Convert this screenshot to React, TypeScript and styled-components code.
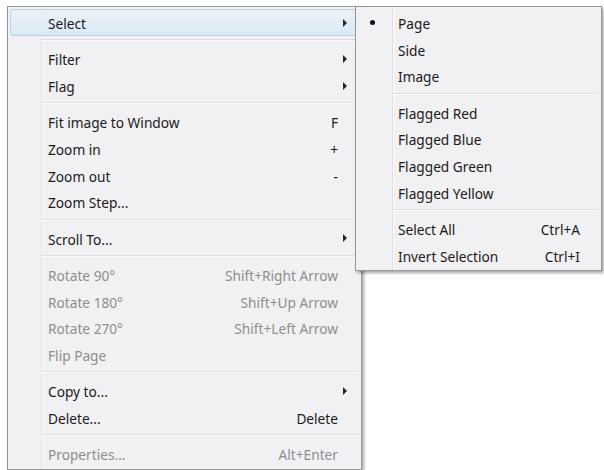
import React from "react";
import styled, { createGlobalStyle } from "styled-components";

const GlobalStyle = createGlobalStyle`
  html, body { margin: 0; padding: 0; background: #ffffff; }
  body { font-family: "Noto Sans", "Open Sans", sans-serif; }
`;

const Stage = styled.div`
  display: flex;
  align-items: flex-start;
  padding: 6px 0 0 7px;
  width: 604px;
  height: 470px;
  box-sizing: border-box;
  overflow: hidden;
`;

const Menu = styled.div<{ $width: number; $gutter: number; $overlap?: boolean }>`
  position: relative;
  width: ${(p) => p.$width}px;
  box-sizing: border-box;
  flex: none;
  border: 1px solid #979797;
  padding: 2px;
  background-color: #f1f0f2;
  background-image: linear-gradient(
    to right,
    transparent ${(p) => p.$gutter}px,
    #e0dfe2 ${(p) => p.$gutter}px,
    #e0dfe2 ${(p) => p.$gutter + 1}px,
    #fbfbfc ${(p) => p.$gutter + 1}px,
    #fbfbfc ${(p) => p.$gutter + 2}px,
    transparent ${(p) => p.$gutter + 2}px
  );
  box-shadow: 2px 2px 3px rgba(0, 0, 0, 0.35);
  margin-left: ${(p) => (p.$overlap ? -7 : 0)}px;
  z-index: ${(p) => (p.$overlap ? 2 : 1)};
  font-size: 13.7px;
  color: #1b1b1b;
`;

const Item = styled.div<{ $disabled?: boolean; $active?: boolean }>`
  display: flex;
  align-items: center;
  height: 26.7px;
  box-sizing: border-box;
  color: ${(p) => (p.$disabled ? "#8f8f8f" : "#1b1b1b")};
  border: 1px solid ${(p) => (p.$active ? "#b5d3e7" : "transparent")};
  border-radius: 3px;
  background: ${(p) =>
    p.$active ? "linear-gradient(to bottom, #eaf3fa, #d9e9f4)" : "transparent"};
  white-space: nowrap;
`;

const Lead = styled.span<{ $width: number }>`
  width: ${(p) => p.$width - 1}px;
  flex: none;
  display: flex;
  align-items: center;
`;

const Bullet = styled.span`
  margin-left: 11px;
  width: 5px;
  height: 5px;
  border-radius: 50%;
  background: #111;
`;

const Label = styled.span`
  flex: 1;
  line-height: 1;
  padding-top: 3px;
`;

const Shortcut = styled.span`
  line-height: 1;
  padding-top: 3px;
`;

const Trail = styled.span<{ $width: number }>`
  width: ${(p) => p.$width - 1}px;
  flex: none;
  display: flex;
  align-items: center;
`;

const Arrow = styled.span`
  margin-left: 5px;
  margin-top: 1px;
  width: 0;
  height: 0;
  border-left: 4px solid #262626;
  border-top: 4px solid transparent;
  border-bottom: 4px solid transparent;
`;

const Separator = styled.div<{ $indent: number }>`
  height: 9.6px;
  display: flex;
  align-items: center;
  padding-left: ${(p) => p.$indent}px;
  &::after {
    content: "";
    flex: 1;
    border-top: 1px solid #dedde0;
    border-bottom: 1px solid #fbfbfc;
    box-sizing: border-box;
    height: 2px;
  }
`;

type Entry =
  | { sep: true }
  | {
      sep?: false;
      label: string;
      shortcut?: string;
      sub?: boolean;
      disabled?: boolean;
      active?: boolean;
      checked?: boolean;
    };

const mainItems: Entry[] = [
  { label: "Select", sub: true, active: true },
  { sep: true },
  { label: "Filter", sub: true },
  { label: "Flag", sub: true },
  { sep: true },
  { label: "Fit image to Window", shortcut: "F" },
  { label: "Zoom in", shortcut: "+" },
  { label: "Zoom out", shortcut: "-" },
  { label: "Zoom Step..." },
  { sep: true },
  { label: "Scroll To...", sub: true },
  { sep: true },
  { label: "Rotate 90°", shortcut: "Shift+Right Arrow", disabled: true },
  { label: "Rotate 180°", shortcut: "Shift+Up Arrow", disabled: true },
  { label: "Rotate 270°", shortcut: "Shift+Left Arrow", disabled: true },
  { label: "Flip Page", disabled: true },
  { sep: true },
  { label: "Copy to...", sub: true },
  { label: "Delete...", shortcut: "Delete" },
  { sep: true },
  { label: "Properties...", shortcut: "Alt+Enter", disabled: true },
];

const subItems: Entry[] = [
  { label: "Page", checked: true },
  { label: "Side" },
  { label: "Image" },
  { sep: true },
  { label: "Flagged Red" },
  { label: "Flagged Blue" },
  { label: "Flagged Green" },
  { label: "Flagged Yellow" },
  { sep: true },
  { label: "Select All", shortcut: "Ctrl+A" },
  { label: "Invert Selection", shortcut: "Ctrl+I" },
];

function MenuList({
  items,
  width,
  gutter,
  lead,
  trail,
  sepIndent,
  overlap,
}: {
  items: Entry[];
  width: number;
  gutter: number;
  lead: number;
  trail: number;
  sepIndent: number;
  overlap?: boolean;
}) {
  return (
    <Menu $width={width} $gutter={gutter} $overlap={overlap}>
      {items.map((it, i) =>
        it.sep ? (
          <Separator key={i} $indent={sepIndent} />
        ) : (
          <Item key={i} $disabled={it.disabled} $active={it.active}>
            <Lead $width={lead}>{it.checked && <Bullet />}</Lead>
            <Label>{it.label}</Label>
            {it.shortcut && <Shortcut>{it.shortcut}</Shortcut>}
            <Trail $width={trail}>{it.sub && <Arrow />}</Trail>
          </Item>
        )
      )}
    </Menu>
  );
}

export default function App() {
  return (
    <>
      <GlobalStyle />
      <Stage>
        <MenuList
          items={mainItems}
          width={355}
          gutter={33}
          lead={38}
          trail={21}
          sepIndent={31}
        />
        <MenuList
          items={subItems}
          width={247}
          gutter={36}
          lead={40}
          trail={19}
          sepIndent={34}
          overlap
        />
      </Stage>
    </>
  );
}
